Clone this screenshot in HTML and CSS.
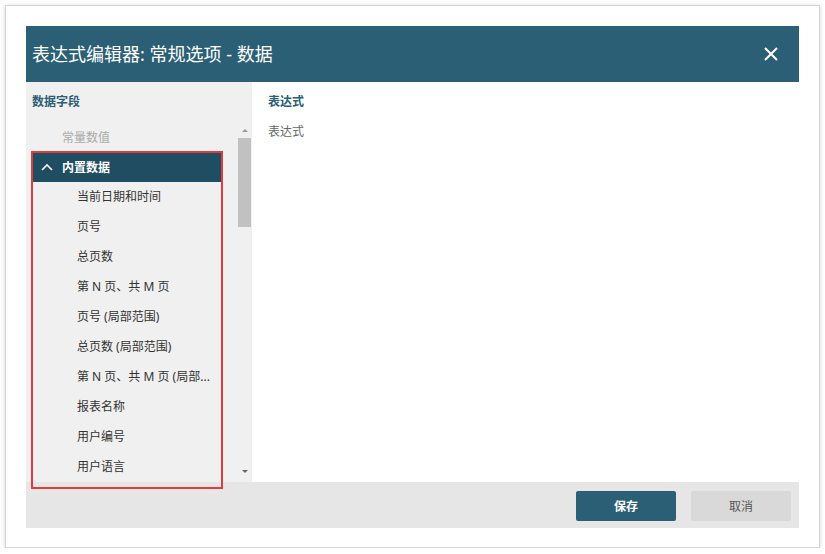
FILE: index.html
```html
<!DOCTYPE html>
<html lang="zh-CN">
<head>
    <meta charset="UTF-8">
    <title>表达式编辑器</title>
    <link rel="stylesheet" href="styles.css">
</head>
<body>

    <div class="frame">
        <div class="dialog">
            <div class="dialog-header">
                <span class="dialog-title">表达式编辑器: 常规选项 - 数据</span>
                <svg class="close" width="16" height="16" viewBox="0 0 16 16">
                    <path d="M2 2 L14 14 M14 2 L2 14" stroke="#fff" stroke-width="2" fill="none"/>
                </svg>
            </div>

            <div class="dialog-body">
                <div class="fields">
                    <div class="panel-title">数据字段</div>
                    <div class="list-wrap">
                        <ul class="tree">
                            <li class="tree-item muted">常量数值</li>
                            <li class="tree-group">
                                <svg width="12" height="8" viewBox="0 0 12 8">
                                    <path d="M1 7 L6 2 L11 7" stroke="#fff" stroke-width="1.6" fill="none"/>
                                </svg>
                                <span>内置数据</span>
                            </li>
                            <li class="tree-item">当前日期和时间</li>
                            <li class="tree-item">页号</li>
                            <li class="tree-item">总页数</li>
                            <li class="tree-item">第 N 页、共 M 页</li>
                            <li class="tree-item">页号 (局部范围)</li>
                            <li class="tree-item">总页数 (局部范围)</li>
                            <li class="tree-item">第 N 页、共 M 页 (局部...</li>
                            <li class="tree-item">报表名称</li>
                            <li class="tree-item">用户编号</li>
                            <li class="tree-item">用户语言</li>
                        </ul>
                        <div class="scrollbar">
                            <span class="arrow-up"></span>
                            <div class="thumb"></div>
                            <span class="arrow-down"></span>
                        </div>
                    </div>
                    <div class="highlight"></div> <!-- annotation box -->
                </div>

                <div class="expression">
                    <div class="panel-title">表达式</div>
                    <div class="expr-text">表达式</div>
                </div>
            </div>

            <div class="dialog-footer">
                <button class="btn save">保存</button>
                <button class="btn cancel">取消</button>
            </div>
        </div>
    </div>

</body>
</html>
```

FILE: styles.css
```css
* {
    box-sizing: border-box;
    margin: 0;
    padding: 0;
}

body {
    background: #fff;
    font-family: "Noto Sans", "Noto Sans CJK SC", sans-serif;
    font-size: 12px;
    color: #333;
}

.frame {
    width: 815px;
    height: 543px;
    margin: 5px 0 0 5px;
    padding: 20px;
    border: 1px solid #d6d6d6;
    box-shadow: 0 1px 4px rgba(0, 0, 0, 0.18);
}

.dialog {
    width: 773px;
    height: 502px;
    display: flex;
    flex-direction: column;
}

.dialog-header {
    height: 56px;
    background: #2b5f75;
    display: flex;
    align-items: center;
    justify-content: space-between;
    padding: 0 20px 0 6px;
}

.dialog-title {
    color: #fff;
    font-size: 18px;
    line-height: 24px;
}

.dialog-body {
    flex: 1;
    display: flex;
    min-height: 0;
}

.fields {
    width: 226px;
    background: #f0f0f0;
    position: relative;
}

.panel-title {
    font-weight: bold;
    color: #2b5f75;
    line-height: 38px;
    padding: 1px 6px 0;
}

.list-wrap {
    display: flex;
    height: 361px;
    overflow: hidden;
}

.tree {
    list-style: none;
    width: 196px;
    padding-left: 6px;
}

.tree-item {
    height: 30px;
    line-height: 30px;
    padding-left: 45px;
    white-space: nowrap;
}

.tree-item.muted {
    color: #aaa;
    padding-left: 30px;
    line-height: 34px;
}

.tree-group {
    height: 30px;
    margin-top: 1px;
    background: #1f4e63;
    color: #fff;
    font-weight: bold;
    display: flex;
    align-items: center;
    gap: 9px;
    padding-left: 9px;
}

.scrollbar {
    width: 13px;
    margin-left: 16px;
    display: flex;
    flex-direction: column;
    align-items: center;
}

.arrow-up,
.arrow-down {
    width: 0;
    height: 0;
    border-left: 3px solid transparent;
    border-right: 3px solid transparent;
}

.arrow-up {
    border-bottom: 3px solid #999;
    margin: 8px 0 6px;
}

.arrow-down {
    border-top: 3px solid #666;
    margin-top: 243px;
}

.thumb {
    width: 13px;
    height: 89px;
    background: #c1c1c1;
}

.highlight {
    position: absolute;
    left: 5px;
    top: 69px;
    width: 192px;
    height: 338px;
    border: 2px solid #e03c3c;
    z-index: 2;
}

.expression {
    flex: 1;
    background: #fff;
    padding: 0 10px;
}

.expr-text {
    color: #666;
    padding: 0 6px;
    line-height: 22px;
}

.dialog-footer {
    height: 46px;
    background: #e6e6e6;
    display: flex;
    justify-content: flex-end;
    align-items: center;
    gap: 15px;
    padding: 2px 8px 0;
}

.btn {
    width: 100px;
    height: 30px;
    border: none;
    border-radius: 2px;
    font-family: inherit;
    font-size: 12px;
}

.save {
    background: #2b5f75;
    color: #fff;
    font-weight: bold;
}

.cancel {
    background: #d9d9d9;
    color: #555;
}
```
